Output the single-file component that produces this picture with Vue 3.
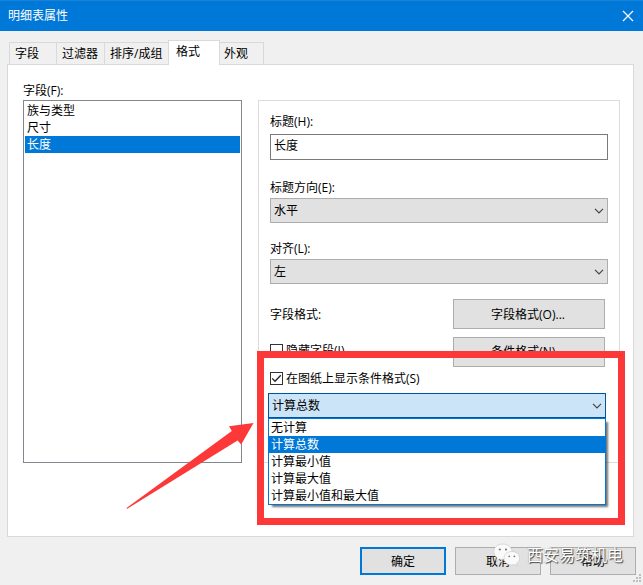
<script setup>
import { ref } from 'vue'

const tabs = ['字段', '过滤器', '排序/成组', '格式', '外观']
const activeTab = ref('格式')
const fields = ['族与类型', '尺寸', '长度']
const selectedField = ref('长度')
const options = ['无计算', '计算总数', '计算最小值', '计算最大值', '计算最小值和最大值']
const selectedOption = ref('计算总数')
</script>

<template>
  <div class="dialog">
    <header class="titlebar">
      <span>明细表属性</span>
      <svg class="close" width="12" height="12" viewBox="0 0 12 12"><path d="M1 1L11 11M11 1L1 11" /></svg>
    </header>

    <nav class="tabs">
      <div
        v-for="(t, i) in tabs"
        :key="t"
        class="tab"
        :class="['tab-' + i, { active: t === activeTab }]"
        @click="activeTab = t"
      >{{ t }}</div>
    </nav>

    <main class="panel">
      <section class="left">
        <div class="label field-label">字段(F):</div>
        <ul class="list">
          <li v-for="f in fields" :key="f" :class="{ selected: f === selectedField }" @click="selectedField = f">{{ f }}</li>
        </ul>
      </section>

      <section class="group">
        <div class="label">标题(H):</div>
        <div class="input">长度</div>
        <div class="label l-dir">标题方向(E):</div>
        <div class="combo">
          <span>水平</span>
          <svg width="10" height="6" viewBox="0 0 10 6"><path d="M1 .8L5 4.8L9 .8" /></svg>
        </div>
        <div class="label l-align">对齐(L):</div>
        <div class="combo">
          <span>左</span>
          <svg width="10" height="6" viewBox="0 0 10 6"><path d="M1 .8L5 4.8L9 .8" /></svg>
        </div>
        <div class="row row-format">
          <span>字段格式:</span>
          <button class="btn wide">字段格式(O)...</button>
        </div>
        <div class="row row-hide">
          <label class="check"><i class="box"></i><span>隐藏字段(I)</span></label>
          <button class="btn wide cond">条件格式(N)...</button>
        </div>
        <label class="check shown">
          <i class="box"><svg width="11" height="11" viewBox="0 0 11 11"><path d="M1.2 5.4L4 8.3L9.8 2.2" /></svg></i>
          <span>在图纸上显示条件格式(S)</span>
        </label>
        <div class="calc">
          <div class="combo open">
            <span>{{ selectedOption }}</span>
            <svg width="10" height="6" viewBox="0 0 10 6"><path d="M1 .8L5 4.8L9 .8" /></svg>
          </div>
          <ul class="popup">
            <li v-for="o in options" :key="o" :class="{ selected: o === selectedOption }" @click="selectedOption = o">{{ o }}</li>
          </ul>
        </div>
      </section>
    </main>

    <footer class="actions">
      <button class="btn primary">确定</button>
      <button class="btn">取消</button>
      <button class="btn">帮助</button>
    </footer>

    <svg class="grip" width="9" height="9" viewBox="0 0 9 9">
      <path d="M6 0h2v2h-2zM3 3h2v2h-2zM6 3h2v2h-2zM0 6h2v2h-2zM3 6h2v2h-2zM6 6h2v2h-2z" />
    </svg>

    <div class="frame"></div>
    <svg class="arrow" width="130" height="88" viewBox="0 0 130 88">
      <path d="M0.5 86L95.500 9.500L93.500 4L127.500 1L115 22.500L111.500 18.500L1.200 86.800Z" class="shaft" />
    </svg>

    <div class="watermark">
      <svg width="28" height="24" viewBox="0 0 28 24">
        <path class="bubble" d="M10 1C4.800 1 .8 4.300 .8 8.700C.8 11.200 2.100 13.300 4.200 14.800L3.300 17.700L6.600 16C7.700 16.300 8.800 16.500 10 16.500C15.200 16.500 19 13 19 8.700C19 4.300 15.200 1 10 1Z" />
        <path class="bubble" d="M18.800 8.500C14.300 8.500 11 11.500 11 15.300C11 19.100 14.300 22 18.800 22C19.800 22 20.800 21.800 21.700 21.500L24.300 23L23.600 20.500C25.500 19.200 26.600 17.400 26.600 15.300C26.600 11.500 23.300 8.500 18.800 8.500Z" />
        <g class="eyes"><circle cx="6.800" cy="6.500" r="1.100" /><circle cx="13" cy="6.500" r="1.100" /><circle cx="16.200" cy="13.300" r=".9" /><circle cx="21.400" cy="13.300" r=".9" /></g>
      </svg>
      <span>西安易筑机电</span>
    </div>
  </div>
</template>

<style>
body {
  margin: 0;
  overflow: hidden;
}
</style>

<style scoped>
* {
  box-sizing: border-box;
}
.dialog {
  position: relative;
  width: 643px;
  height: 585px;
  background: #f0f0f0;
  color: #000;
  font: 12px/17px "Open Sans", "Noto Sans CJK SC", sans-serif;
  white-space: nowrap;
  overflow: hidden;
}
.titlebar {
  display: flex;
  align-items: center;
  justify-content: space-between;
  height: 31px;
  padding: 0 9px 1px 8px;
  background: #0078d7;
  border-top: 1px solid #1883d9;
  color: #fff;
}
.close path {
  stroke: #fff;
  stroke-width: 1.2;
  fill: none;
}
.tabs {
  display: flex;
  align-items: flex-end;
  height: 34px;
  padding-left: 9px;
  position: relative;
  z-index: 1;
}
.tab {
  height: 23px;
  padding: 2px 0 0 5px;
  border: 1px solid #d9d9d9;
  border-right: 0;
}
.tab-0 { width: 47px; }
.tab-1 { width: 48px; }
.tab-2 { width: 64px; }
.tab-3 { width: 52px; }
.tab-4 { width: 44px; border-left: 0; border-right: 1px solid #d9d9d9; padding-left: 4px; }
.tab.active {
  height: 25px;
  padding: 2px 0 0 7px;
  background: #fff;
  border-right: 1px solid #d9d9d9;
  border-bottom: 0;
}
.panel {
  display: flex;
  gap: 16px;
  width: 627px;
  height: 473px;
  margin: -1px 0 0 7px;
  padding: 17px 0 0 15px;
  background: #fff;
  border: 1px solid #d9d9d9;
}
.left {
  width: 219px;
}
.list,
.popup {
  margin: 0;
  padding: 0;
  list-style: none;
}
.list {
  height: 363px;
  margin-top: 1px;
  padding: 1px;
  border: 1px solid #828790;
}
.list li {
  height: 17px;
  padding-left: 2px;
}
.selected {
  background: #0078d7;
  color: #fff;
}
.group {
  width: 362px;
  height: 363px;
  margin-top: 18px;
  padding: 12px 11px 0;
  border: 1px solid #dcdcdc;
}
.input {
  height: 26px;
  margin-top: 4px;
  padding: 2px 3px;
  border: 1px solid #7a7a7a;
}
.l-dir {
  margin-top: 19px;
}
.combo {
  display: flex;
  align-items: center;
  justify-content: space-between;
  width: 338px;
  height: 25px;
  padding: 0 3px;
  background: #e1e1e1;
  border: 1px solid #adadad;
}
.combo path {
  fill: none;
  stroke: #444;
  stroke-width: 1.2;
}
.l-dir + .combo {
  margin-top: 2px;
}
.l-align {
  margin-top: 17px;
}
.l-align + .combo {
  margin-top: 2px;
}
.row {
  display: flex;
  align-items: center;
  justify-content: space-between;
  height: 30px;
  padding-right: 3px;
}
.row-format {
  margin-top: 15px;
}
.row-hide {
  margin-top: 8px;
}
.btn {
  width: 86px;
  height: 28px;
  padding: 0;
  background: #e1e1e1;
  border: 1px solid #adadad;
  color: #000;
  font: inherit;
}
.btn.wide {
  width: 152px;
  height: 30px;
  padding-right: 2px;
}
.btn.cond {
  padding-bottom: 2px;
}
.btn.primary {
  border: 2px solid #0078d7;
}
.check {
  display: flex;
  align-items: center;
  gap: 3px;
}
.row-hide .check {
  padding-bottom: 4px;
}
.box {
  display: flex;
  width: 13px;
  height: 13px;
  background: #fff;
  border: 1px solid #333;
}
.box path {
  fill: none;
  stroke: #222;
  stroke-width: 1.3;
}
.shown {
  margin-top: 3px;
  height: 17px;
}
.calc {
  position: relative;
  z-index: 2;
  width: 338px;
  margin: 6px 0 0 -2px;
}
.combo.open {
  background: #cce4f7;
  border-color: #005499;
}
.popup {
  position: absolute;
  top: 25px;
  left: 0;
  width: 338px;
  height: 87px;
  background: #fff;
  border: 1px solid #0078d7;
  box-shadow: 3px 3px 2px -1px rgba(0, 0, 0, 0.55);
}
.popup li {
  height: 17px;
  padding-left: 2px;
}
.actions {
  display: flex;
  justify-content: flex-end;
  gap: 9px;
  padding: 10px 7px 0 0;
}
.grip {
  position: absolute;
  right: 1px;
  bottom: 2px;
  fill: #bfbfbf;
}
.frame {
  position: absolute;
  left: 257px;
  top: 351px;
  width: 368px;
  height: 174px;
  border: 7px solid #fc3838;
  z-index: 3;
}
.arrow {
  position: absolute;
  left: 126px;
  top: 422px;
}
.shaft {
  fill: #fc3838;
  d: path("M0.5 86L105.8 9L103 4.2L127.5 1L115.2 22.5L111.6 18.5L1.2 86.8Z");
}
.watermark {
  position: absolute;
  left: 493px;
  top: 543px;
  display: flex;
  align-items: center;
  gap: 6px;
  color: #fff;
  font-size: 16px;
  line-height: 24px;
  text-shadow: 1px 1px 1px #444, 0 0 1px #777;
}
.bubble {
  fill: #fafafa;
  stroke: #c4c4c4;
  stroke-width: 0.6;
}
.eyes {
  fill: #777;
}
</style>
